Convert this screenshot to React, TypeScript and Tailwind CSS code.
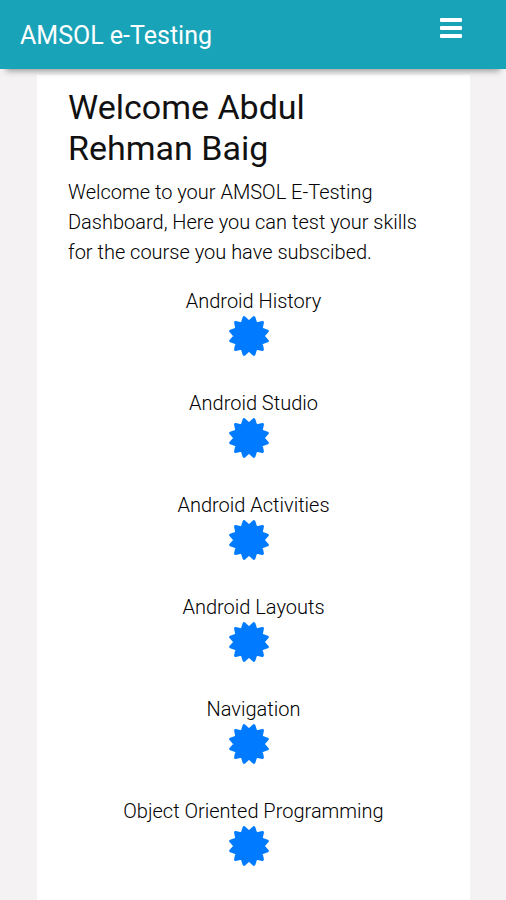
const courses = [
  "Android History",
  "Android Studio",
  "Android Activities",
  "Android Layouts",
  "Navigation",
  "Object Oriented Programming",
];

export default function App() {
  return (
    <div className="flex min-h-screen flex-col bg-[#f4f2f3] font-['Roboto',sans-serif] font-light text-black">
      <Header />
      <main className="ml-[37px] mr-9 mt-1.5 flex-1 bg-white px-[31px] pt-3">
        <h1 className="pr-4 text-[34px] font-normal leading-[41px] text-[#111]">Welcome Abdul Rehman Baig</h1>
        <p className="mt-2 text-[20px] leading-[30px]">
          Welcome to your AMSOL E-Testing Dashboard, Here you can test your skills for the course you have subscibed.
        </p>
        <ul className="mt-[19px] text-center text-[20px]">
          {courses.map((course) => (
            <li key={course} className="mb-8">
              <a href="#" className="flex flex-col items-center leading-[30px]">
                {course}
                <CertificateIcon />
              </a>
            </li>
          ))}
        </ul>
      </main>
    </div>
  );
}

function Header() {
  return (
    <header className="relative z-10 flex h-[69px] items-start justify-between bg-[#19a3b9] pl-5 pr-11 text-white shadow-[0_8px_6px_-6px_#999]">
      <a href="#" className="pt-[21px] text-[25px] font-normal leading-[30px]">
        AMSOL e-Testing
      </a>
      <button type="button" aria-label="Menu" className="mt-4">
        <svg viewBox="0 0 22 24" className="h-6 w-[22px]" fill="currentColor">
          <rect y="2" width="22" height="4" rx="1" />
          <rect y="10" width="22" height="4" rx="1" />
          <rect y="18" width="22" height="4" rx="1" />
        </svg>
      </button>
    </header>
  );
}

// 12-pointed seal, one tip every 30 degrees
const sealPoints = Array.from({ length: 24 }, (_, i) => {
  const angle = (i * Math.PI) / 12;
  const radius = i % 2 === 1 ? 19 : 14;
  return `${(20 + radius * Math.sin(angle)).toFixed(2)},${(20 - radius * Math.cos(angle)).toFixed(2)}`;
}).join(" ");

function CertificateIcon() {
  return (
    <svg viewBox="0 0 40 40" className="mr-2.5 h-10 w-10 overflow-visible" aria-hidden="true">
      <polygon points={sealPoints} fill="#007bff" stroke="#007bff" strokeWidth="3" strokeLinejoin="round" />
    </svg>
  );
}
